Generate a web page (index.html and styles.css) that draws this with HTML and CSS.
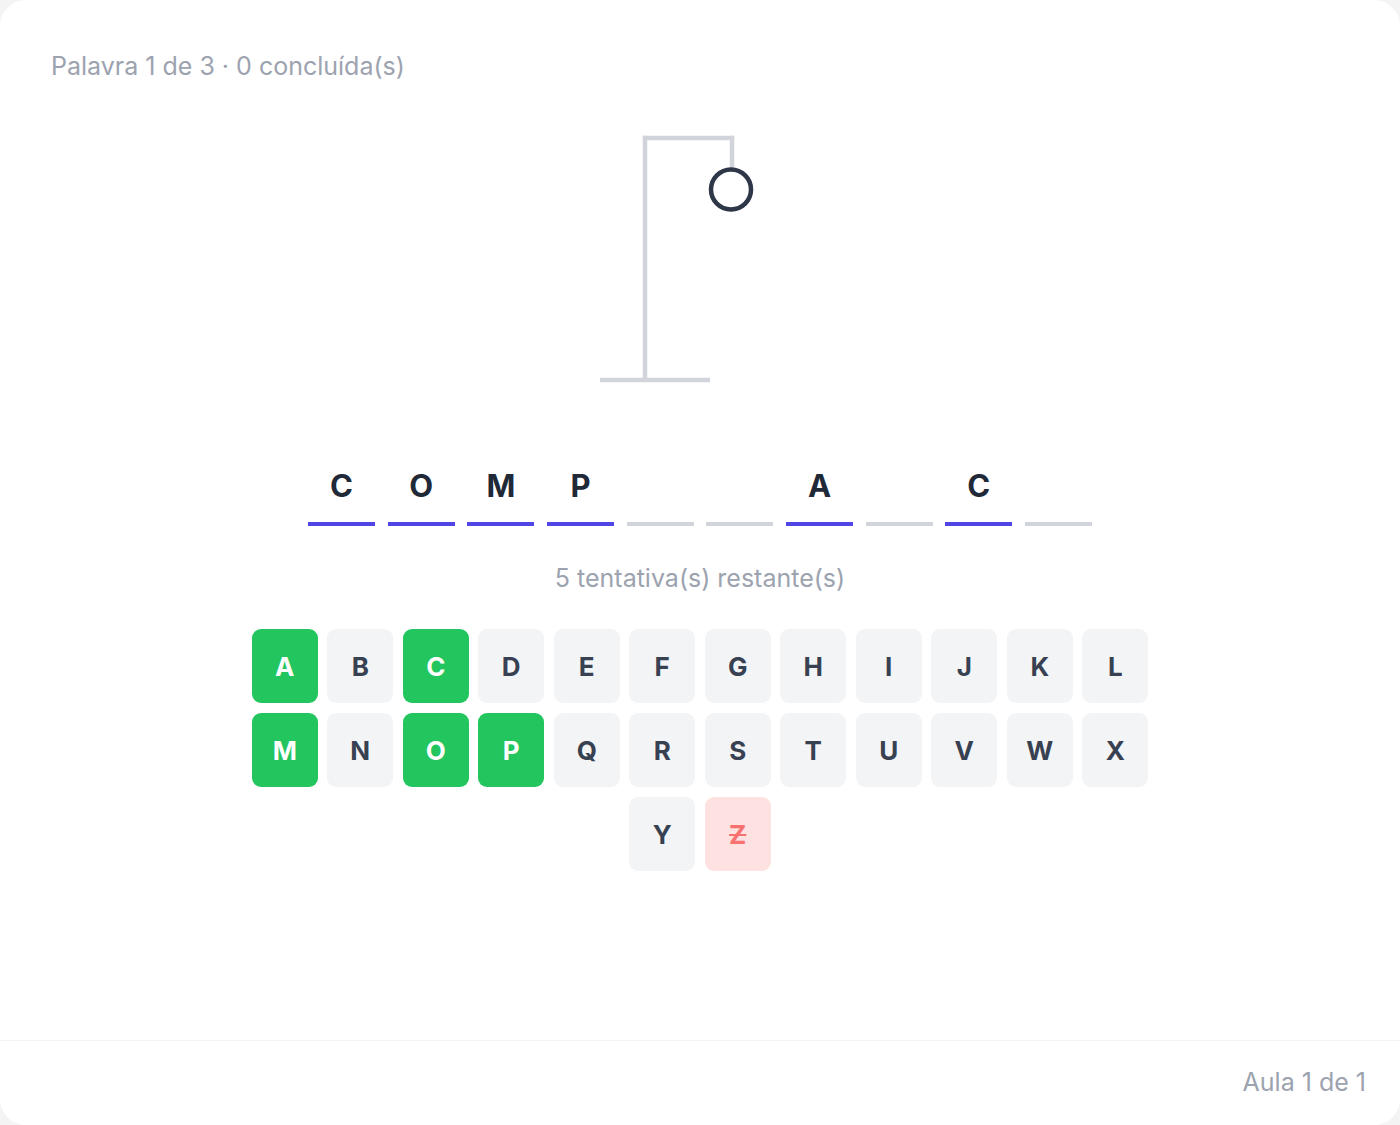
FILE: index.html
```html
<!DOCTYPE html>
<html lang="pt">
<head>
<meta charset="utf-8">
<title>Forca</title>
<link rel="stylesheet" href="styles.css">
</head>
<body>
<div class="card">
  <div class="main">
    <p class="progress">Palavra 1 de 3 · 0 concluída(s)</p>
    <svg class="gallows" width="200" height="250" viewBox="0 0 200 250">
      <g stroke="#d1d5db" stroke-width="4.5" fill="none" stroke-linecap="butt">
        <line x1="0" y1="247" x2="110" y2="247"/>
        <line x1="45" y1="249" x2="45" y2="2.8"/>
        <line x1="42.8" y1="5" x2="134.2" y2="5"/>
        <line x1="132" y1="2.8" x2="132" y2="37"/>
      </g>
      <circle cx="131" cy="56.5" r="20" stroke="#2d3748" stroke-width="4.5" fill="none"/>
    </svg>
    <div class="word">
      <div class="slot filled"><span>C</span></div>
      <div class="slot filled"><span>O</span></div>
      <div class="slot filled"><span>M</span></div>
      <div class="slot filled"><span>P</span></div>
      <div class="slot"><span></span></div>
      <div class="slot"><span></span></div>
      <div class="slot filled"><span>A</span></div>
      <div class="slot"><span></span></div>
      <div class="slot filled"><span>C</span></div>
      <div class="slot"><span></span></div>
    </div>
    <p class="tries">5 tentativa(s) restante(s)</p>
    <div class="keyboard">
      <button class="key hit">A</button>
      <button class="key">B</button>
      <button class="key hit">C</button>
      <button class="key">D</button>
      <button class="key">E</button>
      <button class="key">F</button>
      <button class="key">G</button>
      <button class="key">H</button>
      <button class="key">I</button>
      <button class="key">J</button>
      <button class="key">K</button>
      <button class="key">L</button>
      <button class="key hit">M</button>
      <button class="key">N</button>
      <button class="key hit">O</button>
      <button class="key hit">P</button>
      <button class="key">Q</button>
      <button class="key">R</button>
      <button class="key">S</button>
      <button class="key">T</button>
      <button class="key">U</button>
      <button class="key">V</button>
      <button class="key">W</button>
      <button class="key">X</button>
      <button class="key">Y</button>
      <button class="key miss">Z</button>
    </div>
  </div>
  <div class="footer">
    <span class="lesson">Aula 1 de 1</span>
  </div>
</div>
</body>
</html>
```

FILE: styles.css
```css
html, body {
  margin: 0;
  padding: 0;
}
body {
  background: #f4f4f5;
  font-family: Inter, "Liberation Sans", Arial, sans-serif;
}
.card {
  box-sizing: border-box;
  width: 1400px;
  height: 1125px;
  background: #ffffff;
  border-radius: 26px;
  display: flex;
  flex-direction: column;
  overflow: hidden;
}
.main {
  flex: 1;
  padding: 48px 51px 0;
}
.progress {
  margin: 0;
  font-size: 25px;
  line-height: 36px;
  color: #9ca3af;
}
.gallows {
  display: block;
  margin: 49px auto 0;
}
.word {
  display: flex;
  justify-content: center;
  gap: 12.67px;
  margin-top: 83px;
}
.slot {
  width: 67px;
  display: flex;
  flex-direction: column;
  align-items: center;
}
.slot span {
  display: block;
  height: 40px;
  line-height: 40px;
  font-size: 31px;
  font-weight: 700;
  color: #1f2937;
}
.slot::after {
  content: "";
  display: block;
  width: 100%;
  height: 4px;
  margin-top: 16px;
  background: #d1d5db;
}
.slot.filled::after {
  background: #4f46e5;
}
.tries {
  margin: 34px 0 0;
  text-align: center;
  font-size: 25px;
  line-height: 36px;
  color: #9ca3af;
}
.keyboard {
  width: 897px;
  margin: 33px auto 0;
  display: flex;
  flex-wrap: wrap;
  justify-content: center;
  column-gap: 9.5px;
  row-gap: 10px;
}
.key {
  width: 66px;
  height: 74px;
  border: none;
  border-radius: 9px;
  background: #f3f4f6;
  color: #374151;
  font-family: inherit;
  font-size: 26px;
  font-weight: 700;
  padding: 0;
}
.key.hit {
  background: #22c55e;
  color: #ffffff;
}
.key.miss {
  background: #fee2e2;
  color: #f87171;
  text-decoration: line-through;
}
.footer {
  height: 85px;
  box-sizing: border-box;
  border-top: 1.5px solid #f3f4f6;
  display: flex;
  align-items: center;
  justify-content: flex-end;
  padding: 0 34px 2px 0;
}
.lesson {
  font-size: 25px;
  line-height: 36px;
  color: #9ca3af;
}
```
